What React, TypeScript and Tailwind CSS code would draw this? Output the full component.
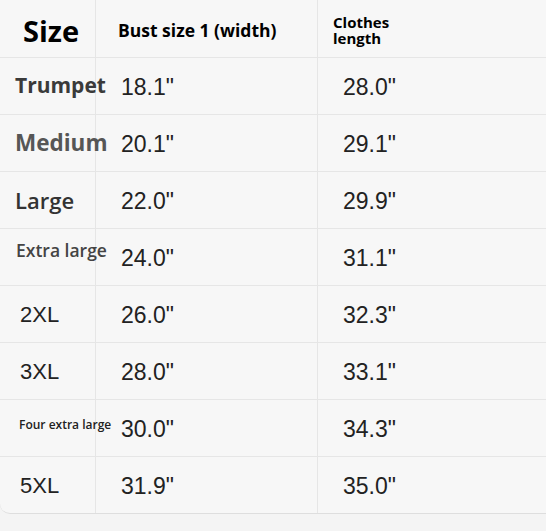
const rows = [
  { label: "Trumpet", cls: "pl-[15px] text-[21px] font-bold text-[#3a3a3a] font-['Open_Sans',sans-serif]", bust: '18.1"', len: '28.0"' },
  { label: "Medium", cls: "pl-[15px] text-[22.5px] font-bold text-[#565656] font-['Open_Sans',sans-serif]", bust: '20.1"', len: '29.1"' },
  { label: "Large", cls: "pl-[15px] text-[22px] font-semibold text-[#333] font-['Open_Sans',sans-serif]", bust: '22.0"', len: '29.9"' },
  { label: "Extra large", cls: "pl-[16px] pb-[13px] text-[17.5px] font-semibold text-[#444] font-['Open_Sans',sans-serif]", bust: '24.0"', len: '31.1"' },
  { label: "2XL", cls: "pl-[20px] text-[22px] text-[#222] font-['Liberation_Sans',sans-serif]", bust: '26.0"', len: '32.3"' },
  { label: "3XL", cls: "pl-[20px] text-[22px] text-[#222] font-['Liberation_Sans',sans-serif]", bust: '28.0"', len: '33.1"' },
  { label: "Four extra large", cls: "pl-[19px] pb-[6px] text-[12px] font-semibold text-[#222] font-['Open_Sans',sans-serif]", bust: '30.0"', len: '34.3"' },
  { label: "5XL", cls: "pl-[20px] text-[22px] text-[#222] font-['Liberation_Sans',sans-serif]", bust: '31.9"', len: '35.0"' },
];

export default function App() {
  return (
    <div className="w-[546px] h-[531px] bg-[#f4f4f4]">
      <div className="bg-[#f7f7f7] border-b border-[#dedede] rounded-bl-[10px] overflow-visible">
        {/* header */}
        <div className="flex h-[58px] border-b border-[#e6e6e6]">
          <div className="w-[96px] shrink-0 flex items-center pl-[23px] pt-[4px] border-r border-[#e6e6e6]">
            <span className="text-[29px] font-bold text-black font-['Open_Sans',sans-serif]">Size</span>
          </div>
          <div className="w-[222px] shrink-0 flex items-center pl-[22px] pt-[4px] border-r border-[#e6e6e6]">
            <span className="text-[17.5px] font-bold text-black whitespace-nowrap font-['Open_Sans',sans-serif]">
              Bust size 1 (width)
            </span>
          </div>
          <div className="flex-1 flex items-center pl-[15px] pt-[3px]">
            <span className="text-[15px] leading-[16px] font-bold text-black font-['Open_Sans',sans-serif]">
              Clothes
              <br />
              length
            </span>
          </div>
        </div>
        {rows.map((r, i) => (
          <div
            key={r.label}
            className={
              i === rows.length - 1
                ? "flex h-[56px]"
                : "flex h-[57px] border-b border-[#e6e6e6]"
            }
          >
            <div className="w-[96px] shrink-0 flex items-center border-r border-[#e6e6e6]">
              <span className={"whitespace-nowrap relative z-10 " + r.cls}>{r.label}</span>
            </div>
            <div className="w-[222px] shrink-0 flex items-center pl-[25px] pt-[2px] border-r border-[#e6e6e6]">
              <span className="text-[23px] text-[#222] font-['Liberation_Sans',sans-serif]">{r.bust}</span>
            </div>
            <div className="flex-1 flex items-center pl-[25px] pt-[2px]">
              <span className="text-[23px] text-[#222] font-['Liberation_Sans',sans-serif]">{r.len}</span>
            </div>
          </div>
        ))}
      </div>
    </div>
  );
}
